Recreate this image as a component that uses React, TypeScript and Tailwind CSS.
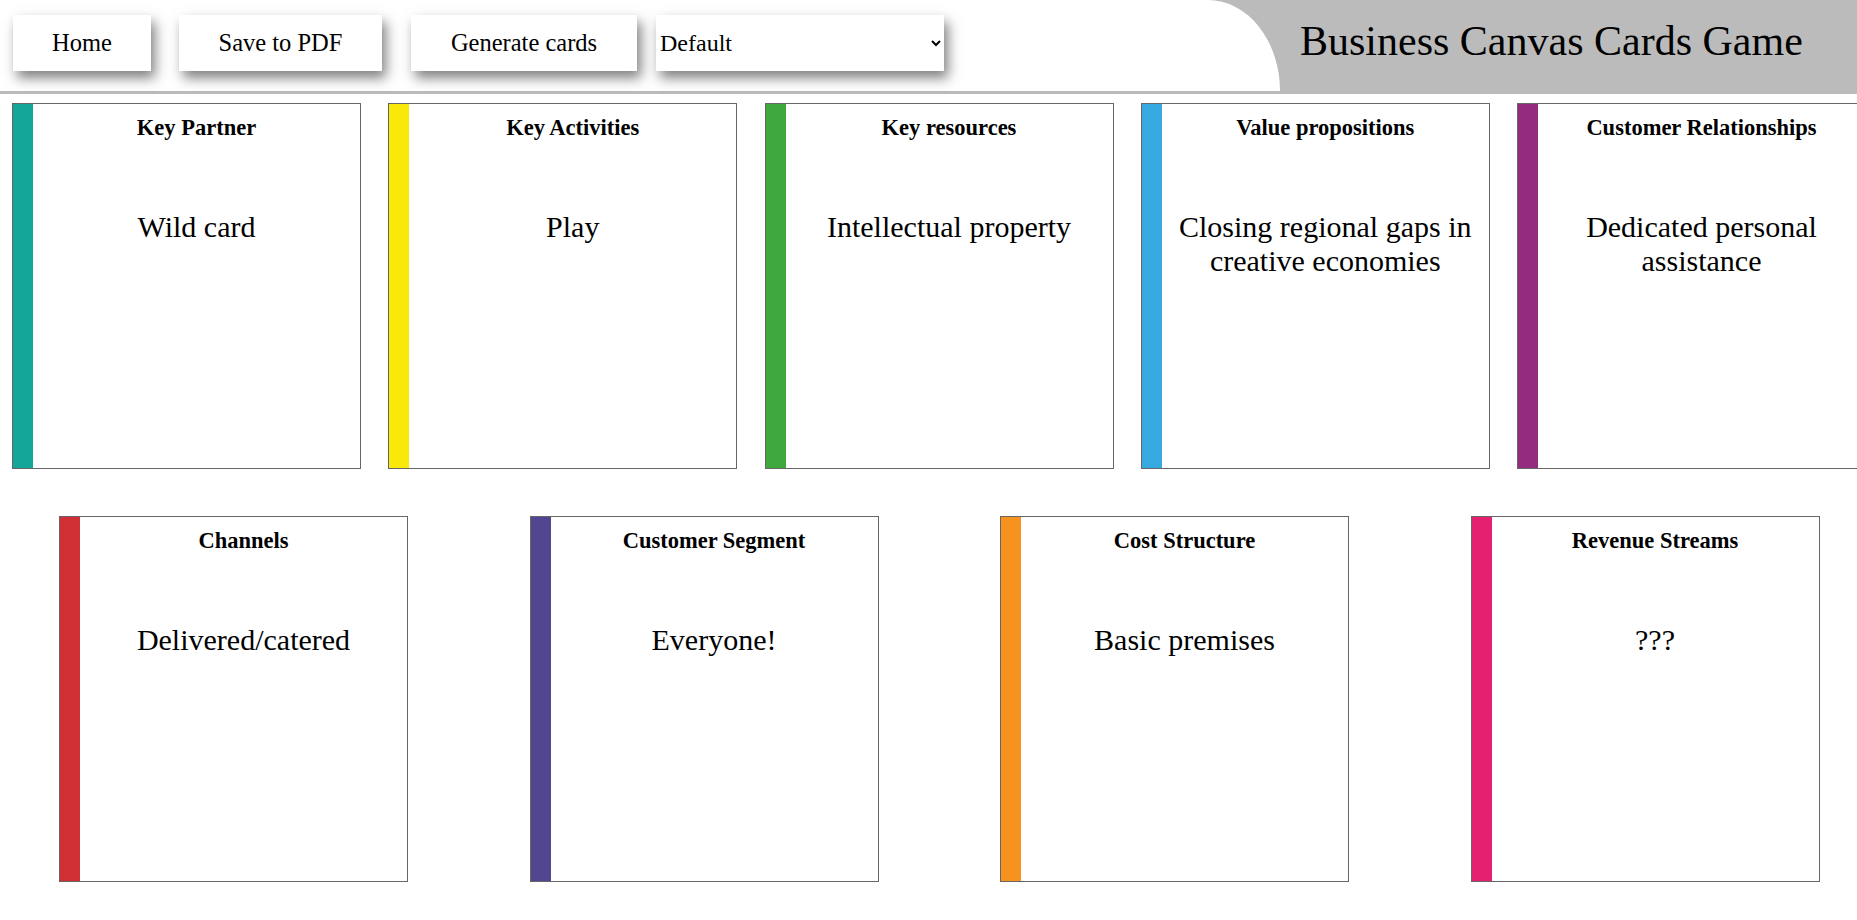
import React, { useState } from "react";

type Card = { title: string; text: string; color: string };

const topRow: Card[] = [
  { title: "Key Partner", text: "Wild card", color: "bg-[#14a699]" },
  { title: "Key Activities", text: "Play", color: "bg-[#fbe80b]" },
  { title: "Key resources", text: "Intellectual property", color: "bg-[#3fa93f]" },
  { title: "Value propositions", text: "Closing regional gaps in creative economies", color: "bg-[#37a9e1]" },
  { title: "Customer Relationships", text: "Dedicated personal assistance", color: "bg-[#952b7f]" },
];

const bottomRow: Card[] = [
  { title: "Channels", text: "Delivered/catered", color: "bg-[#d02f34]" },
  { title: "Customer Segment", text: "Everyone!", color: "bg-[#524691]" },
  { title: "Cost Structure", text: "Basic premises", color: "bg-[#f6921e]" },
  { title: "Revenue Streams", text: "???", color: "bg-[#e52071]" },
];

function CanvasCard({ card }: { card: Card }) {
  return (
    <div className="flex w-[349px] h-[366px] shrink-0 border border-[#666] bg-white">
      <div className={`w-[20px] shrink-0 ${card.color}`} />
      <div className="flex-1 flex flex-col items-center text-center px-[8px]">
        <h3 className="mt-[10.5px] text-[22.5px] font-bold leading-[normal]">{card.title}</h3>
        <p className="mt-[69px] text-[30px] leading-[normal]">{card.text}</p>
      </div>
    </div>
  );
}

export default function App() {
  const [deck, setDeck] = useState("default");

  return (
    <div className="w-full h-[920px] overflow-hidden bg-white text-black font-['Liberation_Serif','Times_New_Roman',serif]">
      {/* HEADER */}
      <header className="flex h-[94px] border-b-[3px] border-[#bbbbbb]">
        <nav className="flex items-start pt-[15px] pl-[13px]">
          <button className="w-[138px] h-[56px] bg-white text-[24.5px] shadow-[4px_7px_12px_rgba(0,0,0,0.5)]">
            Home
          </button>
          <button className="ml-[28px] w-[203px] h-[56px] bg-white text-[24.5px] shadow-[4px_7px_12px_rgba(0,0,0,0.5)]">
            Save to PDF
          </button>
          <button className="ml-[29px] w-[226px] h-[56px] bg-white text-[24.5px] shadow-[4px_7px_12px_rgba(0,0,0,0.5)]">
            Generate cards
          </button>
          <select
            value={deck}
            onChange={(e) => setDeck(e.target.value)}
            className="ml-[19px] w-[288px] h-[56px] bg-white border-0 font-['Liberation_Serif','Times_New_Roman',serif] text-[24px] shadow-[4px_7px_12px_rgba(0,0,0,0.5)] outline-none"
          >
            <option value="default">Default</option>
            <option value="custom">Custom</option>
          </select>
        </nav>

        <div className="ml-auto flex w-[649px] bg-[#bbbbbb]">
          <div className="w-[72px] bg-white rounded-tr-[72px_91px]" />
          <h1 className="ml-[20px] mt-[17px] text-[42px] font-normal leading-[normal] whitespace-nowrap">
            Business Canvas Cards Game
          </h1>
        </div>
      </header>

      {/* CARDS */}
      <div className="flex mt-[9px] pl-[12px] gap-[27.25px]">
        {topRow.map((c) => (
          <CanvasCard key={c.title} card={c} />
        ))}
      </div>
      <div className="flex mt-[47px] pl-[59px] gap-[121.5px]">
        {bottomRow.map((c) => (
          <CanvasCard key={c.title} card={c} />
        ))}
      </div>
    </div>
  );
}
